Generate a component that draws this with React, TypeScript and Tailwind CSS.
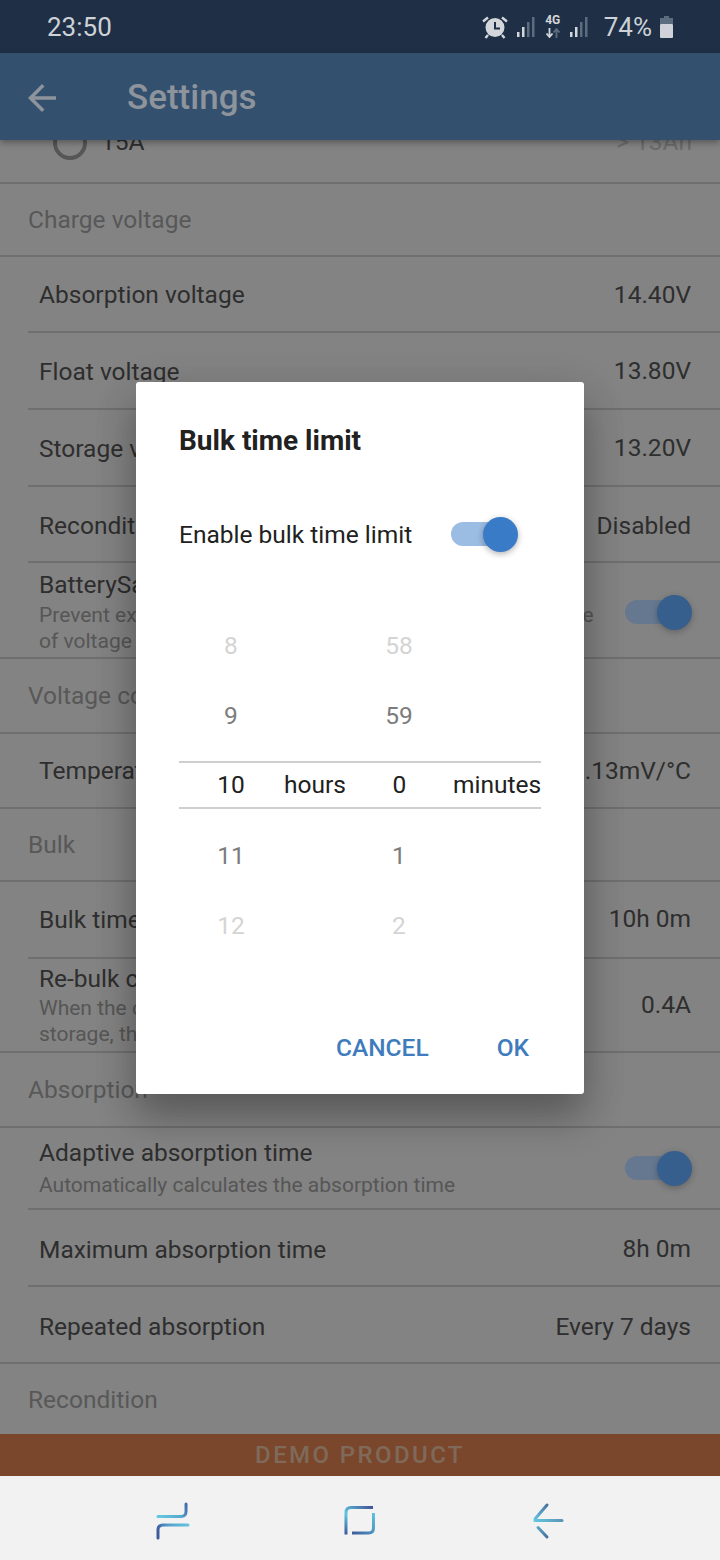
import { clsx } from 'clsx'

type SettingRow = {
  title: string
  sub?: string[]
  value?: string
  toggle?: boolean
  height: string
  full?: boolean
  pad?: string
  subGap?: string
}

// colours below are the dimmed ones, as they look under the dialog's scrim
function DimToggle() {
  return (
    <div className="-mr-px flex items-center">
      <div className="h-6 w-[49px] rounded-full bg-[#65788f]" />
      <div className="-ml-[17px] h-[35px] w-[35px] rounded-full bg-[#375f8e] shadow-[0_2px_6px_rgba(0,0,0,0.25)]" />
    </div>
  )
}

function Row({ row }: { row: SettingRow }) {
  return (
    <div className={clsx(row.full ? 'pl-0' : 'pl-[28px]')}>
      <div
        className={clsx(
          'flex items-center justify-between border-b-2 border-[#6f6f6f] pr-[29px]',
          row.full ? 'pl-[39px]' : 'pl-[11px]',
          row.height,
          row.pad,
        )}
      >
        <div className="min-w-0 flex-1">
          <div className="text-[24.5px] leading-[30px] text-[#2e2e2e]">{row.title}</div>
          <div className={row.subGap}>
            {row.sub?.map((line) => (
              <div key={line} className="whitespace-nowrap text-[21px] leading-[26px] text-[#565656]">
                {line}
              </div>
            ))}
          </div>
        </div>
        {row.value && <div className="whitespace-nowrap text-[24.5px] text-[#2e2e2e]">{row.value}</div>}
        {row.toggle && <DimToggle />}
      </div>
    </div>
  )
}

function Section({ title, height, last }: { title: string; height: string; last?: boolean }) {
  return (
    <div
      className={clsx(
        'flex items-center pl-[28px] pt-[2px] text-[24.5px] text-[#585858]',
        !last && 'border-b-2 border-[#6f6f6f]',
        height,
      )}
    >
      {title}
    </div>
  )
}

function Signal() {
  return (
    <svg width="18" height="20" viewBox="0 0 18 20">
      <rect x="0" y="15" width="2.5" height="5" fill="#d3d7dc" />
      <rect x="5" y="10" width="2.5" height="10" fill="#d3d7dc" />
      <rect x="10" y="5" width="2.5" height="15" fill="#5d6d80" />
      <rect x="15" y="0" width="2.5" height="20" fill="#5d6d80" />
    </svg>
  )
}

function StatusBar() {
  return (
    <div className="flex h-[53px] items-center justify-between bg-[#1f2f45] pl-[47px] pr-[47px] text-[#cdd2d8]">
      <span className="pt-[2px] text-[26px]">23:50</span>
      <div className="flex items-center">
        <svg width="28" height="24" viewBox="0 0 28 24" className="mr-[8px]">
          <path d="M2 6.5 7 2.5M26 6.5 21 2.5" stroke="#d3d7dc" strokeWidth="2.4" fill="none" />
          <circle cx="14" cy="12.5" r="9.5" fill="#d3d7dc" />
          <path d="M14 7v6.5h5" stroke="#1f2f45" strokeWidth="2" fill="none" />
          <path d="M7 20 4.5 23M21 20l2.5 3" stroke="#d3d7dc" strokeWidth="2.4" fill="none" />
        </svg>
        <Signal />
        <div className="ml-[10px] mr-[9px] flex flex-col items-center">
          <span className="text-[12px] font-bold leading-[11px] text-[#d3d7dc]">4G</span>
          <svg width="16" height="10" viewBox="0 0 16 10" className="mt-[2px]">
            <path d="M4.5 0v8M1.5 5.5l3 3.5 3-3.5" stroke="#d3d7dc" strokeWidth="1.8" fill="none" />
            <path d="M11.5 10V2M8.5 4.5l3-3.5 3 3.5" stroke="#5d6d80" strokeWidth="1.8" fill="none" />
          </svg>
        </div>
        <Signal />
        <span className="ml-[16px] mr-[8px] pt-[2px] text-[26px]">74%</span>
        <svg width="13" height="22" viewBox="0 0 13 22">
          <rect x="4" y="0" width="5" height="3" fill="#5d6d80" />
          <rect x="0" y="2" width="13" height="6" fill="#5d6d80" />
          <rect x="0" y="8" width="13" height="14" rx="1" fill="#cfd3d9" />
        </svg>
      </div>
    </div>
  )
}

function Toolbar() {
  return (
    <div className="relative z-10 flex h-[87px] items-center bg-[#34506f] pl-[21px] pt-[3px] shadow-[0_3px_6px_rgba(0,0,0,0.3)]">
      <svg width="42" height="42" viewBox="0 0 24 24" fill="#8d949c">
        <path d="M20 11H7.83l5.59-5.59L12 4l-8 8 8 8 1.41-1.41L7.83 13H20v-2z" />
      </svg>
      <span className="ml-[64px] text-[35px] font-medium text-[#8d949c]">Settings</span>
    </div>
  )
}

const groupOne: SettingRow[] = [
  { title: 'Absorption voltage', value: '14.40V', height: 'h-[76px]', pad: 'pt-[2px]' },
  { title: 'Float voltage', value: '13.80V', height: 'h-[77px]', pad: 'pt-[2px]' },
  { title: 'Storage voltage', value: '13.20V', height: 'h-[77px]', pad: 'pt-[2px]' },
  { title: 'Recondition voltage', value: 'Disabled', height: 'h-[76px]', pad: 'pt-[4px]' },
]

function SettingsList() {
  return (
    <div className="h-[1294px] overflow-hidden bg-[#838383]">
      {/* radio row is scrolled mostly under the toolbar */}
      <div className="-mt-[37px] flex h-[81px] items-center justify-between border-b-2 border-[#6f6f6f] pl-[53px] pr-[28px]">
        <div className="flex items-center">
          <div className="h-[34px] w-[34px] rounded-full border-[4px] border-[#565656]" />
          <span className="ml-[14px] text-[24.5px] text-[#2e2e2e]">15A</span>
        </div>
        <span className="text-[24.5px] text-[#6a6a6a]">&gt; 13Ah</span>
      </div>

      <Section title="Charge voltage" height="h-[73px]" />
      {groupOne.map((row) => (
        <Row key={row.title} row={row} />
      ))}
      <Row
        row={{
          title: 'BatterySafe',
          sub: ['Prevent excessive gassing by automatically limiting the rate', 'of voltage increase'],
          toggle: true,
          height: 'h-[96px]',
          full: true,
          pad: 'pt-[4px]',
          subGap: 'mt-[2px]',
        }}
      />

      <Section title="Voltage compensation" height="h-[75px]" />
      <Row row={{ title: 'Temperature compensation', value: '-16.13mV/°C', height: 'h-[75px]', full: true, pad: 'pt-[1px]' }} />

      <Section title="Bulk" height="h-[73px]" />
      <Row row={{ title: 'Bulk time limit', value: '10h 0m', height: 'h-[77px]' }} />
      <Row
        row={{
          title: 'Re-bulk current',
          sub: ['When the current rises above this level during', 'storage, the charger returns to bulk'],
          value: '0.4A',
          height: 'h-[94px]',
          full: true,
          pad: 'pt-[1px]',
          subGap: 'mt-[1px]',
        }}
      />

      <Section title="Absorption" height="h-[75px]" />
      <Row
        row={{
          title: 'Adaptive absorption time',
          sub: ['Automatically calculates the absorption time'],
          toggle: true,
          height: 'h-[82px]',
          subGap: 'mt-[4px]',
        }}
      />
      <Row row={{ title: 'Maximum absorption time', value: '8h 0m', height: 'h-[77px]', pad: 'pt-[4px]' }} />
      <Row row={{ title: 'Repeated absorption', value: 'Every 7 days', height: 'h-[77px]', full: true, pad: 'pt-[5px]' }} />

      <Section title="Recondition" height="h-[70px]" last />
    </div>
  )
}

function PickerRow({ hour, minute, color }: { hour: string; minute: string; color: string }) {
  return (
    <div className={clsx('flex h-[70px] items-center text-[24.5px]', color)}>
      <span className="w-[104px] text-center">{hour}</span>
      <span className="ml-[62px] w-[108px] text-center">{minute}</span>
    </div>
  )
}

function BulkDialog() {
  return (
    <div className="absolute left-[136px] top-[329px] z-20 h-[712px] w-[448px] rounded-[3px] bg-white px-[43px] shadow-[0_24px_38px_rgba(0,0,0,0.25),0_9px_46px_rgba(0,0,0,0.12)]">
      <div className="flex h-[116px] items-center pt-[1px] text-[28px] font-bold text-[#212121]">Bulk time limit</div>
      <div className="flex h-[72px] items-center text-[24.5px] text-[#212121]">
        <span className="w-[272px] pt-[2px]">Enable bulk time limit</span>
        <div className="flex items-center">
          <div className="h-6 w-[49px] rounded-full bg-[#9bbce3]" />
          <div className="-ml-[17px] h-[35px] w-[35px] rounded-full bg-[#3a7bc8] shadow-[0_2px_6px_rgba(0,0,0,0.3)]" />
        </div>
      </div>

      <div className="mt-[41px] w-[362px]">
        <PickerRow hour="8" minute="58" color="text-[#d4d4d4]" />
        <PickerRow hour="9" minute="59" color="text-[#7c7c7c]" />
        <div className="mb-[12px] mt-[10px] flex h-[48px] items-center border-y-2 border-[#cfcfcf] text-[24.5px] text-[#212121]">
          <span className="w-[104px] text-center">10</span>
          <span className="ml-px w-[62px] whitespace-nowrap text-center">hours</span>
          <span className="w-[107px] text-center">0</span>
          <span className="w-[86px] whitespace-nowrap text-center">minutes</span>
        </div>
        <PickerRow hour="11" minute="1" color="text-[#7c7c7c]" />
        <PickerRow hour="12" minute="2" color="text-[#d4d4d4]" />
      </div>

      <div className="mt-[69px] flex justify-end gap-[68px] pr-[12px] text-[24.5px] font-medium text-[#3f7cbd]">
        <span>CANCEL</span>
        <span>OK</span>
      </div>
    </div>
  )
}

function NavBar() {
  return (
    <div className="flex h-[84px] items-center bg-[#f2f2f2] pl-[143px] pt-1">
      <svg width="60" height="60" viewBox="0 0 60 60" fill="none" strokeWidth="3" strokeLinecap="round">
        <defs>
          <linearGradient id="recentTop" gradientUnits="userSpaceOnUse" x1="18" y1="26" x2="46" y2="14">
            <stop offset="0" stopColor="#63c5de" />
            <stop offset="0.6" stopColor="#54a9d0" />
            <stop offset="1" stopColor="#3c5a9c" />
          </linearGradient>
          <linearGradient id="recentBottom" gradientUnits="userSpaceOnUse" x1="46" y1="35" x2="18" y2="48">
            <stop offset="0" stopColor="#63c5de" />
            <stop offset="0.6" stopColor="#54a0cc" />
            <stop offset="1" stopColor="#3c5a9c" />
          </linearGradient>
        </defs>
        <path d="M15 26.5H38Q43 26.5 43 21.5V14" stroke="url(#recentTop)" />
        <path d="M45 35H20Q15 35 15 40V48" stroke="url(#recentBottom)" />
      </svg>
      <svg width="60" height="60" viewBox="0 0 60 60" fill="none" strokeWidth="3" className="ml-[127px]">
        <defs>
          <linearGradient id="homeTop" gradientUnits="userSpaceOnUse" x1="16" y1="44" x2="44" y2="17">
            <stop offset="0" stopColor="#3c5a9c" />
            <stop offset="0.35" stopColor="#5fc4e0" />
            <stop offset="1" stopColor="#404f94" />
          </linearGradient>
          <linearGradient id="homeBottom" gradientUnits="userSpaceOnUse" x1="44" y1="23" x2="22" y2="43">
            <stop offset="0" stopColor="#5fc4e0" />
            <stop offset="1" stopColor="#3c5a9c" />
          </linearGradient>
        </defs>
        <path d="M43 17.5H21Q16 17.5 16 22.5V44.5" stroke="url(#homeTop)" />
        <path d="M43.5 23V38Q43.5 43 38.5 43H22" stroke="url(#homeBottom)" />
      </svg>
      <svg width="60" height="60" viewBox="0 0 60 60" fill="none" strokeWidth="3" strokeLinecap="round" className="ml-[130px]">
        <defs>
          <linearGradient id="backTop" gradientUnits="userSpaceOnUse" x1="14" y1="30" x2="27" y2="14">
            <stop offset="0" stopColor="#63c8e0" />
            <stop offset="1" stopColor="#46709f" />
          </linearGradient>
          <linearGradient id="backMid" gradientUnits="userSpaceOnUse" x1="14" y1="30" x2="43" y2="30">
            <stop offset="0" stopColor="#63c8e0" />
            <stop offset="1" stopColor="#5a94b4" />
          </linearGradient>
          <linearGradient id="backLow" gradientUnits="userSpaceOnUse" x1="17" y1="37" x2="27" y2="47">
            <stop offset="0" stopColor="#5ba8c8" />
            <stop offset="1" stopColor="#44709f" />
          </linearGradient>
        </defs>
        <path d="M27 15 15 29" stroke="url(#backTop)" />
        <path d="M15 30.5H42" stroke="url(#backMid)" />
        <path d="M18 37.5 27 47" stroke="url(#backLow)" />
      </svg>
    </div>
  )
}

export default function App() {
  return (
    <div className="h-[1560px] w-[720px] overflow-hidden font-['Roboto',sans-serif]">
      <StatusBar />
      <div className="relative">
        <Toolbar />
        <SettingsList />
        <div className="flex h-[42px] items-center justify-center bg-[#7a472c] text-[24px] font-medium tracking-[2.4px] text-[#7f6a5a]">
          DEMO PRODUCT
        </div>
        <BulkDialog />
      </div>
      <NavBar />
    </div>
  )
}
